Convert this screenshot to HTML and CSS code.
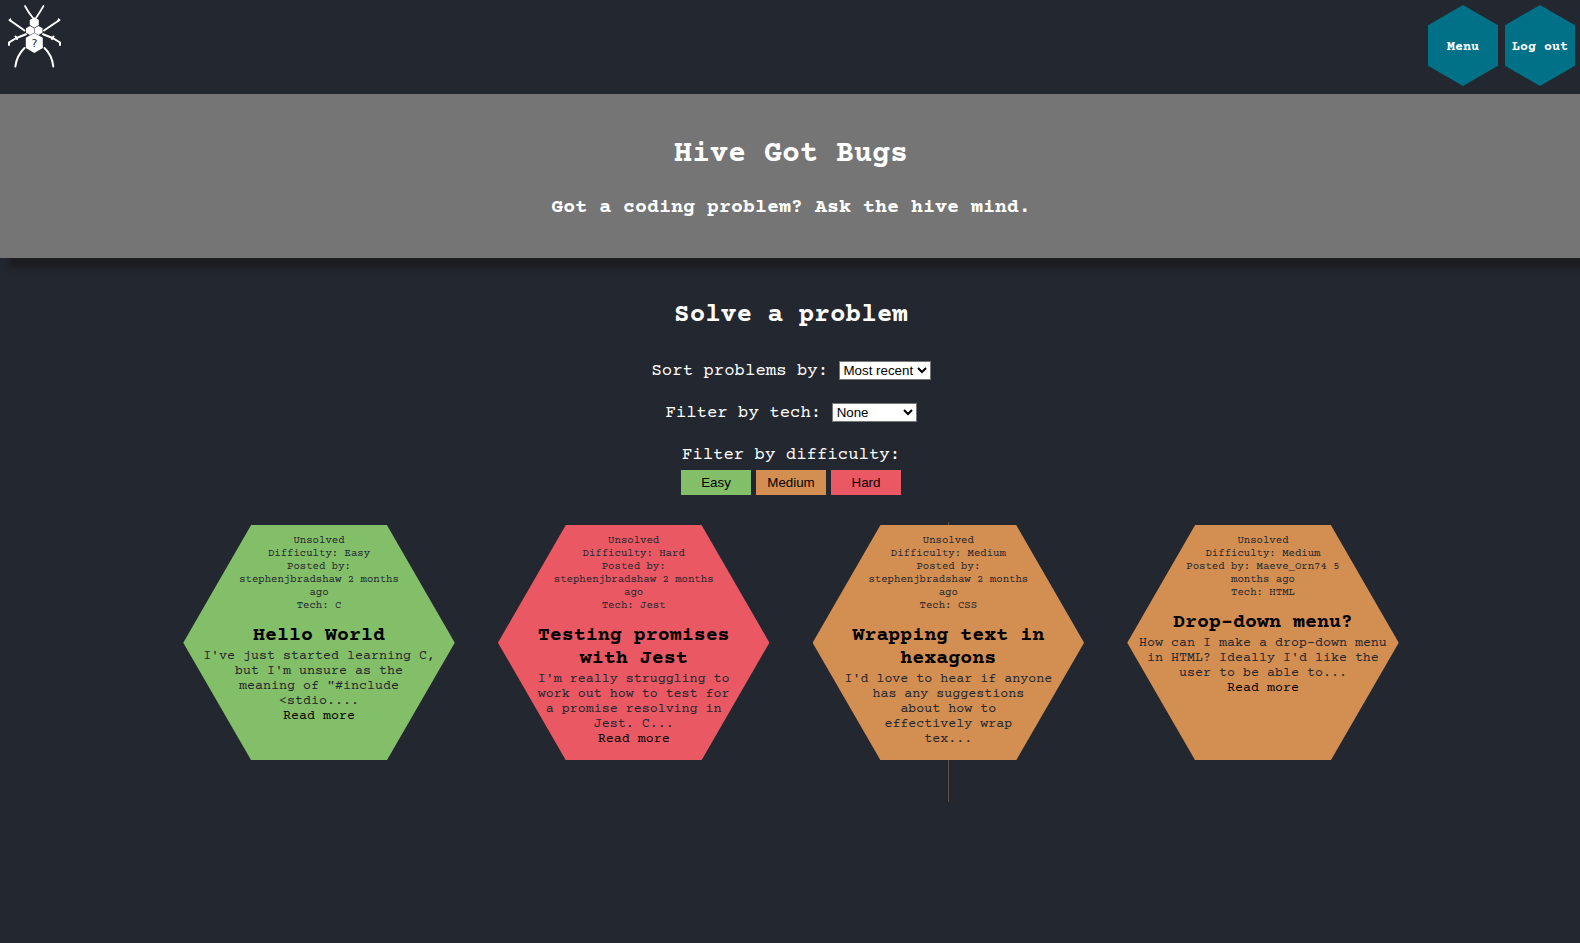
FILE: index.html
```html
<!DOCTYPE html>
<html lang="en">
<head>
<meta charset="utf-8">
<title>Hive Got Bugs</title>
<link rel="stylesheet" href="styles.css">
</head>
<body>
<header class="topbar">
  <svg class="logo" width="80" height="80" viewBox="0 0 80 80" fill="none" stroke="#fff" stroke-linecap="round">
    <path stroke-width="1.7" d="M25 6 Q28 12 33 18M43.5 6 Q40 12 36 18"/>
    <path stroke-width="2" d="M9.500 20 L24.500 30.500M59.500 20 L44 30.500"/>
    <path stroke-width="1.500" d="M10.500 19 V21M58.500 19 V21"/>
    <path stroke-width="2" d="M26 34.300 L16.500 38 L9 42.500 V45M43 34.300 L52.500 38 L60 42.500 V45M15.500 36.500 L17 39M53.500 36.500 L52 39"/>
    <path stroke-width="2" d="M24.500 48 Q17 55 15.300 66.500M44.500 48 Q52 55 53.300 66.500"/>
    <g fill="#fff" stroke="none">
      <path d="M34.300 17.300 L38.800 20 V25 L34.300 27.800 L29.800 25 V20Z"/>
      <path d="M30 26 L34 28.200 V32.800 L30 35 L26 32.800 V28.200Z"/>
      <path d="M38.500 26 L42.500 28.200 V32.800 L38.500 35 L34.500 32.800 V28.200Z"/>
      <path d="M34.300 33 L42.800 37.800 V48 L34.300 53 L25.800 48 V37.800Z"/>
    </g>
    <text class="logo-mark" x="34.300" y="46.500" text-anchor="middle">?</text>
  </svg>
  <nav class="nav"><a class="nav-hex">Menu</a><a class="nav-hex">Log out</a></nav>
</header>
<section class="banner">
  <h1>Hive Got Bugs</h1>
  <p>Got a coding problem? Ask the hive mind.</p>
</section>
<main>
  <h2>Solve a problem</h2>
  <div class="filter"><label for="sort">Sort problems by:</label><select id="sort" class="sort"><option>Most recent</option></select></div>
  <div class="filter"><label for="tech">Filter by tech:</label><select id="tech" class="tech"><option>None</option></select></div>
  <div class="filter">Filter by difficulty:</div>
  <div class="levels"><button class="easy">Easy</button><button class="medium">Medium</button><button class="hard">Hard</button></div>
  <div class="cards">
    <article class="slot"><div class="card easy">
      <p class="meta">Unsolved<br>Difficulty: Easy<br>Posted by:<br>stephenjbradshaw 2 months<br>ago<br>Tech: C</p>
      <h3>Hello World</h3>
      <p class="text">I've just started learning C,<br>but I'm unsure as the<br>meaning of "#include<br>&lt;stdio....<br><a>Read more</a></p>
    </div></article>
    <article class="slot"><div class="card hard">
      <p class="meta">Unsolved<br>Difficulty: Hard<br>Posted by:<br>stephenjbradshaw 2 months<br>ago<br>Tech: Jest</p>
      <h3>Testing promises<br>with Jest</h3>
      <p class="text">I'm really struggling to<br>work out how to test for<br>a promise resolving in<br>Jest. C...<br><a>Read more</a></p>
    </div></article>
    <article class="slot lined"><div class="card medium">
      <p class="meta">Unsolved<br>Difficulty: Medium<br>Posted by:<br>stephenjbradshaw 2 months<br>ago<br>Tech: CSS</p>
      <h3>Wrapping text in<br>hexagons</h3>
      <p class="text">I'd love to hear if anyone<br>has any suggestions<br>about how to<br>effectively wrap<br>tex...</p>
    </div></article>
    <article class="slot"><div class="card medium">
      <p class="meta">Unsolved<br>Difficulty: Medium<br>Posted by: Maeve_Orn74 5<br>months ago<br>Tech: HTML</p>
      <h3>Drop-down menu?</h3>
      <p class="text">How can I make a drop-down menu<br>in HTML? Ideally I'd like the<br>user to be able to...<br><a>Read more</a></p>
    </div></article>
  </div>
</main>
</body>
</html>
```
FILE: styles.css
```css
* { box-sizing: border-box; }
body, h1, h2, h3, p { margin: 0; }
body {
  min-height: 943px;
  background: #23272f;
  color: #fff;
  font-family: "Courier Prime", "Liberation Mono", monospace;
  text-align: center;
  overflow: hidden;
}
.topbar {
  display: flex;
  justify-content: space-between;
  height: 94px;
}
.logo { display: block; }
.logo-mark { font: 11px "DejaVu Sans", sans-serif; fill: #23272f; stroke: none; }
.nav { display: flex; gap: 7px; padding: 5px 5px 0 0; }
.nav-hex {
  display: flex;
  align-items: center;
  justify-content: center;
  width: 70px;
  height: 81px;
  padding-top: 4px;
  background: #017187;
  clip-path: polygon(50% 0, 100% 25%, 100% 75%, 50% 100%, 0 75%, 0 25%);
  font-size: 13.333px;
  font-weight: bold;
  white-space: nowrap;
}
.banner {
  height: 164px;
  padding: 44px 0 0 2px;
  background: #757575;
  box-shadow: 9px 10px 6px #1c1d20;
}
h1 { font-size: 30px; line-height: 34px; }
.banner p { margin-top: 19px; font-size: 20px; line-height: 34px; font-weight: bold; }
main { padding-left: 2px; }
h2 { padding-top: 43px; font-size: 26px; line-height: 30px; }
.filter {
  display: flex;
  justify-content: center;
  align-items: center;
  gap: 10.400px;
  height: 20px;
  margin-top: 22px;
  font-size: 17.333px;
}
h2 + .filter { margin-top: 30px; }
select {
  height: 19px;
  margin-bottom: 2px;
  padding: 0;
  border: 1px solid #767676;
  border-radius: 0;
  background: #fff;
  color: #000;
  font: 13.333px "Liberation Sans", Arial, sans-serif;
}
.sort { width: 92px; }
.tech { width: 85px; }
.levels { display: flex; justify-content: center; gap: 5px; margin: 5px 0 30px; }
.levels button {
  width: 70px;
  height: 25px;
  padding: 0;
  border: 0;
  color: #000;
  font: 13.333px "Liberation Sans", Arial, sans-serif;
}
.easy { background: #83bf68; }
.medium { background: #d38e51; }
.hard { background: #ea5863; }
.cards {
  display: grid;
  grid-template-columns: repeat(4, 314.667px);
  justify-content: center;
}
.slot { position: relative; display: flex; justify-content: center; }
.lined::before {
  content: "";
  position: absolute;
  left: 50%;
  top: -3px;
  width: 1px;
  height: 280px;
  margin-left: -0.500px;
  background: #604c41;
}
.card {
  position: relative;
  width: 271.500px;
  height: 235.300px;
  padding-top: 10px;
  clip-path: polygon(25% 0, 75% 0, 100% 50%, 75% 100%, 25% 100%, 0 50%);
  color: #23272f;
  white-space: nowrap;
}
.meta { font-size: 10.667px; line-height: 13px; }
h3 { margin-top: 11px; color: #000; font-size: 20px; line-height: 23px; }
.text { margin-top: 1.500px; font-size: 13.333px; line-height: 15px; }
.text a { color: #000; }
```
